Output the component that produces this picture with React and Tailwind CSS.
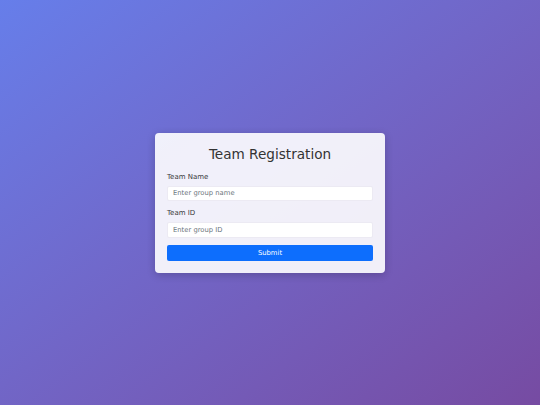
import React, { useState } from "react";

export default function App() {
  const [teamName, setTeamName] = useState("");
  const [teamId, setTeamId] = useState("");

  return (
    <div
      className="min-h-screen w-full flex items-center justify-center bg-gradient-to-br from-[#667eea] to-[#764ba2]"
      style={{ fontFamily: '"DejaVu Sans", sans-serif' }}
    >
      <div className="w-[230px] rounded-[4px] bg-white/90 shadow-[0_2px_8px_rgba(0,0,0,0.2)] px-[12px] pt-[12px] pb-[12px]">
        <h2 className="text-center text-[13.6px] leading-[19px] text-[#333] mb-[8px]">
          Team Registration
        </h2>

        <form onSubmit={(e) => e.preventDefault()}>
          <label className="block text-[7px] leading-[10px] text-[#3a3a3a] mb-[4px]">Team Name</label>
          <input
            className="block w-full h-[15.5px] rounded-[2px] bg-white border border-[#eceaf3] px-[5px] text-[6.8px] text-[#333] placeholder:text-[#6c757d] outline-none"
            placeholder="Enter group name"
            value={teamName}
            onChange={(e) => setTeamName(e.target.value)}
          />

          <label className="block text-[7px] leading-[10px] text-[#3a3a3a] mt-[7px] mb-[4px]">Team ID</label>
          <input
            className="block w-full h-[15.5px] rounded-[2px] bg-white border border-[#eceaf3] px-[5px] text-[6.8px] text-[#333] placeholder:text-[#6c757d] outline-none"
            placeholder="Enter group ID"
            value={teamId}
            onChange={(e) => setTeamId(e.target.value)}
          />

          <button
            type="submit"
            className="block w-full h-[16px] mt-[7px] rounded-[2px] bg-[#0d6efd] text-white text-[6.8px] leading-[16px]"
          >
            Submit
          </button>
        </form>
      </div>
    </div>
  );
}
